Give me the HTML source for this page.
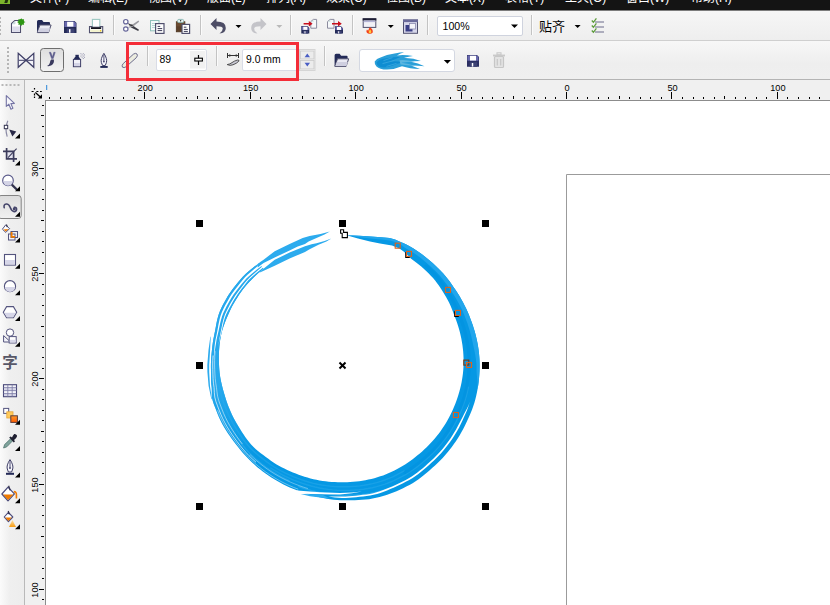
<!DOCTYPE html>
<html lang="zh"><head><meta charset="utf-8"><title>CorelDRAW</title>
<style>
html,body{margin:0;padding:0;background:#fff;}
#app{position:relative;width:830px;height:605px;overflow:hidden;background:#f0f0f0;font-family:"Liberation Sans", "Noto Sans CJK SC", sans-serif;font-size:11px;color:#000;}
.abs{position:absolute;}
#menubar{position:absolute;left:0;top:0;width:830px;height:11px;background:linear-gradient(#141414 0,#141414 10px,#7c7c7c 10px,#7c7c7c 11px);overflow:hidden;}
#menubar span{position:absolute;top:-8.6px;color:#fff;font-size:12px;line-height:14px;white-space:nowrap;}
#tb1{position:absolute;left:0;top:11px;width:830px;height:29px;background:linear-gradient(#f6f6f6,#eeeeee);}
#tb2{position:absolute;left:0;top:41px;width:830px;height:38px;background:linear-gradient(#f7f7f7,#eeeeee 60%,#efefef);}
.hl{position:absolute;left:0;width:830px;height:1px;}
#toolbox{position:absolute;left:0;top:80px;width:24px;height:525px;background:linear-gradient(90deg,#fbfbfb,#efefef 40%,#ededed);}
#hruler{position:absolute;left:25px;top:80px;width:805px;height:20px;background:#f0f0f0;}
#vruler{position:absolute;left:25px;top:100px;width:20px;height:505px;background:#f0f0f0;}
#canvas{position:absolute;left:46px;top:101px;width:784px;height:504px;background:#fff;}
.rl{position:absolute;font-size:9.2px;line-height:10px;color:#000;white-space:nowrap;}
.inp{position:absolute;background:#fff;border:1px solid #d4d8e2;border-radius:2px;box-sizing:border-box;font-size:11px;}
.inp span{position:absolute;white-space:nowrap;}
svg{position:absolute;left:0;top:0;overflow:visible;}
</style></head>
<body><div id="app">
<div id="menubar">
<div class="abs" style="left:0;top:0;width:10px;height:4px;background:#7db52c"></div>
<div class="abs" style="left:4.5px;top:-1px;width:2.6px;height:3.6px;background:#22300c;transform:skewX(-18deg)"></div>
<span style="left:30px">文件(F)</span>
<span style="left:88px">编辑(E)</span>
<span style="left:148px">视图(V)</span>
<span style="left:207px">版面(L)</span>
<span style="left:266px">排列(A)</span>
<span style="left:326px">效果(C)</span>
<span style="left:386px">位图(B)</span>
<span style="left:445px">文本(X)</span>
<span style="left:505px">表格(T)</span>
<span style="left:565px">工具(O)</span>
<span style="left:626px">窗口(W)</span>
<span style="left:691px">帮助(H)</span>
</div>
<div id="tb1"></div>
<div class="inp" style="left:437px;top:16px;width:86px;height:20px;border-color:#cfd3de"><span style="left:4.5px;top:3px;font-size:10.6px;">100%</span></div>
<div class="abs" style="left:539px;top:19px;font-size:13px;line-height:16px;white-space:nowrap">贴齐</div>
<div class="hl" style="top:40px;background:#cfcfcf"></div>
<div id="tb2"></div>
<div class="inp" style="left:156px;top:49px;width:51px;height:22px;border-color:#d9dce6"><span style="left:2.6px;top:4.2px;font-size:10.4px;">89</span></div>
<div class="inp" style="left:242px;top:49px;width:58px;height:22px;border-color:#d9dce6"><span style="left:3px;top:4.2px;font-size:10.4px;">9.0 mm</span></div>
<div class="inp" style="left:359px;top:49px;width:96px;height:23px;border-color:#d4d8e2;border-radius:3px"></div>
<div class="hl" style="top:79px;background:#b4b4b4"></div>
<div id="toolbox"></div>
<div class="abs" style="left:24px;top:80px;width:1px;height:525px;background:#b9b9b9"></div>
<div id="hruler"></div><div id="vruler"></div>
<div class="abs" style="left:2px;top:354px;width:16px;height:18px;font-size:15.5px;line-height:18px;font-weight:bold;color:#585868;text-align:center">字</div>
<div class="abs" style="left:45px;top:100px;width:785px;height:1px;background:#8c8c8c"></div>
<div class="abs" style="left:45px;top:100px;width:1px;height:505px;background:#8c8c8c"></div>
<div id="canvas"></div>
<div class="rl" style="left:130.2px;top:82.5px;width:30px;text-align:center">200</div>
<div class="rl" style="left:235.6px;top:82.5px;width:30px;text-align:center">150</div>
<div class="rl" style="left:341.1px;top:82.5px;width:30px;text-align:center">100</div>
<div class="rl" style="left:446.6px;top:82.5px;width:30px;text-align:center">50</div>
<div class="rl" style="left:552.0px;top:82.5px;width:30px;text-align:center">0</div>
<div class="rl" style="left:657.5px;top:82.5px;width:30px;text-align:center">50</div>
<div class="rl" style="left:762.9px;top:82.5px;width:30px;text-align:center">100</div>
<div class="rl" style="left:20.3px;top:163.8px;width:30px;height:10px;text-align:center;transform:rotate(-90deg);transform-origin:50% 50%">300</div>
<div class="rl" style="left:20.3px;top:269.1px;width:30px;height:10px;text-align:center;transform:rotate(-90deg);transform-origin:50% 50%">250</div>
<div class="rl" style="left:20.3px;top:374.3px;width:30px;height:10px;text-align:center;transform:rotate(-90deg);transform-origin:50% 50%">200</div>
<div class="rl" style="left:20.3px;top:479.6px;width:30px;height:10px;text-align:center;transform:rotate(-90deg);transform-origin:50% 50%">150</div>
<div class="rl" style="left:20.3px;top:584.8px;width:30px;height:10px;text-align:center;transform:rotate(-90deg);transform-origin:50% 50%">100</div>
<svg width="830" height="605" viewBox="0 0 830 605">
<rect x="49" y="97" width="1" height="2" fill="#000"/>
<rect x="60" y="97" width="1" height="2" fill="#000"/>
<rect x="70" y="97" width="1" height="2" fill="#000"/>
<rect x="81" y="97" width="1" height="2" fill="#000"/>
<rect x="91" y="96" width="1" height="3" fill="#000"/>
<rect x="102" y="97" width="1" height="2" fill="#000"/>
<rect x="113" y="97" width="1" height="2" fill="#000"/>
<rect x="123" y="97" width="1" height="2" fill="#000"/>
<rect x="134" y="97" width="1" height="2" fill="#000"/>
<rect x="144" y="92" width="1" height="7" fill="#000"/>
<rect x="155" y="97" width="1" height="2" fill="#000"/>
<rect x="165" y="97" width="1" height="2" fill="#000"/>
<rect x="176" y="97" width="1" height="2" fill="#000"/>
<rect x="186" y="97" width="1" height="2" fill="#000"/>
<rect x="197" y="96" width="1" height="3" fill="#000"/>
<rect x="207" y="97" width="1" height="2" fill="#000"/>
<rect x="218" y="97" width="1" height="2" fill="#000"/>
<rect x="229" y="97" width="1" height="2" fill="#000"/>
<rect x="239" y="97" width="1" height="2" fill="#000"/>
<rect x="250" y="92" width="1" height="7" fill="#000"/>
<rect x="260" y="97" width="1" height="2" fill="#000"/>
<rect x="271" y="97" width="1" height="2" fill="#000"/>
<rect x="281" y="97" width="1" height="2" fill="#000"/>
<rect x="292" y="97" width="1" height="2" fill="#000"/>
<rect x="302" y="96" width="1" height="3" fill="#000"/>
<rect x="313" y="97" width="1" height="2" fill="#000"/>
<rect x="323" y="97" width="1" height="2" fill="#000"/>
<rect x="334" y="97" width="1" height="2" fill="#000"/>
<rect x="345" y="97" width="1" height="2" fill="#000"/>
<rect x="355" y="92" width="1" height="7" fill="#000"/>
<rect x="366" y="97" width="1" height="2" fill="#000"/>
<rect x="376" y="97" width="1" height="2" fill="#000"/>
<rect x="387" y="97" width="1" height="2" fill="#000"/>
<rect x="397" y="97" width="1" height="2" fill="#000"/>
<rect x="408" y="96" width="1" height="3" fill="#000"/>
<rect x="418" y="97" width="1" height="2" fill="#000"/>
<rect x="429" y="97" width="1" height="2" fill="#000"/>
<rect x="439" y="97" width="1" height="2" fill="#000"/>
<rect x="450" y="97" width="1" height="2" fill="#000"/>
<rect x="461" y="92" width="1" height="7" fill="#000"/>
<rect x="471" y="97" width="1" height="2" fill="#000"/>
<rect x="482" y="97" width="1" height="2" fill="#000"/>
<rect x="492" y="97" width="1" height="2" fill="#000"/>
<rect x="503" y="97" width="1" height="2" fill="#000"/>
<rect x="513" y="96" width="1" height="3" fill="#000"/>
<rect x="524" y="97" width="1" height="2" fill="#000"/>
<rect x="534" y="97" width="1" height="2" fill="#000"/>
<rect x="545" y="97" width="1" height="2" fill="#000"/>
<rect x="555" y="97" width="1" height="2" fill="#000"/>
<rect x="566" y="92" width="1" height="7" fill="#000"/>
<rect x="577" y="97" width="1" height="2" fill="#000"/>
<rect x="587" y="97" width="1" height="2" fill="#000"/>
<rect x="598" y="97" width="1" height="2" fill="#000"/>
<rect x="608" y="97" width="1" height="2" fill="#000"/>
<rect x="619" y="96" width="1" height="3" fill="#000"/>
<rect x="629" y="97" width="1" height="2" fill="#000"/>
<rect x="640" y="97" width="1" height="2" fill="#000"/>
<rect x="650" y="97" width="1" height="2" fill="#000"/>
<rect x="661" y="97" width="1" height="2" fill="#000"/>
<rect x="671" y="92" width="1" height="7" fill="#000"/>
<rect x="682" y="97" width="1" height="2" fill="#000"/>
<rect x="693" y="97" width="1" height="2" fill="#000"/>
<rect x="703" y="97" width="1" height="2" fill="#000"/>
<rect x="714" y="97" width="1" height="2" fill="#000"/>
<rect x="724" y="96" width="1" height="3" fill="#000"/>
<rect x="735" y="97" width="1" height="2" fill="#000"/>
<rect x="745" y="97" width="1" height="2" fill="#000"/>
<rect x="756" y="97" width="1" height="2" fill="#000"/>
<rect x="766" y="97" width="1" height="2" fill="#000"/>
<rect x="777" y="92" width="1" height="7" fill="#000"/>
<rect x="787" y="97" width="1" height="2" fill="#000"/>
<rect x="798" y="97" width="1" height="2" fill="#000"/>
<rect x="809" y="97" width="1" height="2" fill="#000"/>
<rect x="819" y="97" width="1" height="2" fill="#000"/>
<rect x="42" y="105" width="2" height="1" fill="#000"/>
<rect x="41" y="115" width="3" height="1" fill="#000"/>
<rect x="42" y="126" width="2" height="1" fill="#000"/>
<rect x="42" y="136" width="2" height="1" fill="#000"/>
<rect x="42" y="147" width="2" height="1" fill="#000"/>
<rect x="42" y="157" width="2" height="1" fill="#000"/>
<rect x="39" y="168" width="5" height="1" fill="#000"/>
<rect x="42" y="178" width="2" height="1" fill="#000"/>
<rect x="42" y="189" width="2" height="1" fill="#000"/>
<rect x="42" y="199" width="2" height="1" fill="#000"/>
<rect x="42" y="210" width="2" height="1" fill="#000"/>
<rect x="41" y="220" width="3" height="1" fill="#000"/>
<rect x="42" y="231" width="2" height="1" fill="#000"/>
<rect x="42" y="241" width="2" height="1" fill="#000"/>
<rect x="42" y="252" width="2" height="1" fill="#000"/>
<rect x="42" y="263" width="2" height="1" fill="#000"/>
<rect x="39" y="273" width="5" height="1" fill="#000"/>
<rect x="42" y="284" width="2" height="1" fill="#000"/>
<rect x="42" y="294" width="2" height="1" fill="#000"/>
<rect x="42" y="305" width="2" height="1" fill="#000"/>
<rect x="42" y="315" width="2" height="1" fill="#000"/>
<rect x="41" y="326" width="3" height="1" fill="#000"/>
<rect x="42" y="336" width="2" height="1" fill="#000"/>
<rect x="42" y="347" width="2" height="1" fill="#000"/>
<rect x="42" y="357" width="2" height="1" fill="#000"/>
<rect x="42" y="368" width="2" height="1" fill="#000"/>
<rect x="39" y="378" width="5" height="1" fill="#000"/>
<rect x="42" y="389" width="2" height="1" fill="#000"/>
<rect x="42" y="399" width="2" height="1" fill="#000"/>
<rect x="42" y="410" width="2" height="1" fill="#000"/>
<rect x="42" y="420" width="2" height="1" fill="#000"/>
<rect x="41" y="431" width="3" height="1" fill="#000"/>
<rect x="42" y="441" width="2" height="1" fill="#000"/>
<rect x="42" y="452" width="2" height="1" fill="#000"/>
<rect x="42" y="462" width="2" height="1" fill="#000"/>
<rect x="42" y="473" width="2" height="1" fill="#000"/>
<rect x="39" y="484" width="5" height="1" fill="#000"/>
<rect x="42" y="494" width="2" height="1" fill="#000"/>
<rect x="42" y="505" width="2" height="1" fill="#000"/>
<rect x="42" y="515" width="2" height="1" fill="#000"/>
<rect x="42" y="526" width="2" height="1" fill="#000"/>
<rect x="41" y="536" width="3" height="1" fill="#000"/>
<rect x="42" y="547" width="2" height="1" fill="#000"/>
<rect x="42" y="557" width="2" height="1" fill="#000"/>
<rect x="42" y="568" width="2" height="1" fill="#000"/>
<rect x="42" y="578" width="2" height="1" fill="#000"/>
<rect x="39" y="589" width="5" height="1" fill="#000"/>
<rect x="42" y="599" width="2" height="1" fill="#000"/>
<path d="M830 174.5 H566.5 V605" fill="none" stroke="#9b9b9b" stroke-width="1"/>
<path d="M348.00 235.20 L359.00 235.80 L367.20 236.30 L381.00 237.20 L389.50 237.90 L395.00 239.40 L399.40 241.40 L403.71 243.24 L406.89 244.83 L410.03 246.52 L413.10 248.33 L416.11 250.23 L419.06 252.23 L421.95 254.32 L424.77 256.48 L427.54 258.72 L430.25 261.02 L432.91 263.37 L435.52 265.78 L438.10 268.23 L440.61 270.74 L443.03 273.34 L445.34 276.03 L447.57 278.80 L449.72 281.62 L451.79 284.50 L453.82 287.41 L455.80 290.34 L457.74 293.30 L459.60 296.32 L461.39 299.38 L463.09 302.49 L464.71 305.64 L466.25 308.83 L467.70 312.07 L469.08 315.34 L470.38 318.64 L471.62 321.96 L472.78 325.32 L473.87 328.71 L474.87 332.12 L475.79 335.56 L476.61 339.03 L477.35 342.52 L477.99 346.03 L478.53 349.56 L478.96 353.10 L479.29 356.66 L479.51 360.23 L479.61 363.81 L479.60 367.38 L479.51 370.96 L479.32 374.53 L479.04 378.10 L478.66 381.66 L478.20 385.21 L477.63 388.74 L476.98 392.26 L476.22 395.76 L475.37 399.23 L474.41 402.68 L473.31 406.09 L472.09 409.45 L470.77 412.77 L469.37 416.06 L467.90 419.31 L466.40 422.54 L464.84 425.75 L463.21 428.92 L461.50 432.04 L459.71 435.13 L457.85 438.17 L455.91 441.16 L453.89 444.10 L451.80 446.98 L449.63 449.81 L447.38 452.58 L445.05 455.29 L442.66 457.93 L440.18 460.50 L437.64 463.00 L435.02 465.43 L432.39 467.83 L429.73 470.22 L427.04 472.57 L424.30 474.87 L421.49 477.09 L418.61 479.23 L415.64 481.26 L412.59 483.15 L409.46 484.90 L406.29 486.58 L403.08 488.19 L399.84 489.72 L396.55 491.16 L393.23 492.52 L389.88 493.79 L386.49 494.97 L383.06 496.05 L379.61 497.02 L376.13 497.87 L372.61 498.57 L369.07 499.13 L365.52 499.55 L361.95 499.86 L358.39 500.07 L354.83 500.20 L351.27 500.26 L347.72 500.26 L344.18 500.23 L340.64 500.16 L337.11 499.96 L333.58 499.65 L330.07 499.23 L326.58 498.70 L323.11 498.07 L319.66 497.35 L316.24 496.54 L312.84 495.64 L309.47 494.67 L306.12 493.62 L302.80 492.50 L299.50 491.33 L296.23 490.10 L292.99 488.79 L289.78 487.41 L286.60 485.95 L283.47 484.41 L280.37 482.79 L277.31 481.10 L274.30 479.33 L271.34 477.49 L268.42 475.57 L265.56 473.57 L262.75 471.50 L259.99 469.36 L257.29 467.15 L254.65 464.86 L252.08 462.50 L249.56 460.08 L247.12 457.59 L244.75 455.03 L242.45 452.41 L240.22 449.73 L238.02 447.02 L235.86 444.28 L233.74 441.50 L231.67 438.69 L229.64 435.83 L227.68 432.93 L225.79 429.97 L223.99 426.96 L222.27 423.89 L220.65 420.76 L219.14 417.58 L217.75 414.34 L216.50 411.04 L215.24 407.75 L213.93 404.46 L212.78 401.11 L212.02 397.66 L211.82 394.08 L211.83 390.50 L211.70 386.97 L211.27 383.51 L211.06 380.03 L211.00 376.55 L211.00 373.07 L210.95 369.61 L210.90 366.15 L210.97 362.70 L211.13 359.24 L211.38 355.80 L211.70 352.36 L212.06 348.92 L212.46 345.49 L212.92 342.06 L213.48 338.65 L214.18 335.26 L214.89 331.87 L215.53 328.45 L216.16 325.01 L216.84 321.56 L217.63 318.13 L218.60 314.74 L219.79 311.43 L221.22 308.21 L222.79 305.07 L224.45 301.97 L226.17 298.90 L227.95 295.87 L229.87 292.93 L231.90 290.06 L234.03 287.27 L236.22 284.53 L238.44 281.83 L240.67 279.14 L243.00 276.53 L245.50 274.08 L248.12 271.76 L250.80 269.53 L253.51 267.34 L256.21 265.15 L263.49 268.54 L261.02 270.69 L258.57 272.86 L256.16 275.07 L253.78 277.33 L251.46 279.63 L249.18 282.00 L246.98 284.43 L244.85 286.93 L242.81 289.50 L240.86 292.15 L239.03 294.87 L237.26 297.64 L235.52 300.42 L233.84 303.24 L232.25 306.11 L230.76 309.04 L229.40 312.03 L228.05 315.02 L226.74 318.03 L225.48 321.06 L224.30 324.13 L223.21 327.23 L222.24 330.37 L221.41 333.55 L220.72 336.77 L220.16 340.01 L219.70 343.26 L219.35 346.52 L219.10 349.79 L218.95 353.05 L218.87 356.32 L218.87 359.58 L218.95 362.83 L219.08 366.08 L219.28 369.32 L219.56 372.55 L219.99 375.76 L220.52 378.95 L221.17 382.12 L221.89 385.27 L222.69 388.38 L223.55 391.48 L224.45 394.56 L225.37 397.62 L226.36 400.66 L227.41 403.67 L228.54 406.66 L229.74 409.61 L231.01 412.54 L232.36 415.42 L233.78 418.27 L235.29 421.07 L236.87 423.83 L238.52 426.54 L240.19 429.24 L241.87 431.94 L243.59 434.60 L245.38 437.24 L247.25 439.81 L249.22 442.31 L251.31 444.71 L253.53 446.99 L255.86 449.15 L258.28 451.21 L260.76 453.19 L263.28 455.10 L265.82 456.98 L268.35 458.85 L270.89 460.69 L273.49 462.46 L276.14 464.13 L278.84 465.71 L281.59 467.21 L284.37 468.62 L287.19 469.97 L290.03 471.24 L292.90 472.44 L295.78 473.59 L298.69 474.68 L301.60 475.72 L304.53 476.72 L307.49 477.62 L310.47 478.44 L313.47 479.18 L316.49 479.84 L319.52 480.41 L322.56 480.90 L325.62 481.32 L328.68 481.66 L331.74 481.92 L334.81 482.12 L337.88 482.24 L340.95 482.30 L344.02 482.29 L347.09 482.21 L350.16 482.05 L353.22 481.83 L356.28 481.53 L359.32 481.16 L362.36 480.70 L365.39 480.18 L368.40 479.57 L371.40 478.89 L374.37 478.13 L377.33 477.29 L380.27 476.37 L383.17 475.38 L386.05 474.29 L388.89 473.12 L391.70 471.86 L394.46 470.51 L397.19 469.09 L399.87 467.60 L402.51 466.03 L405.11 464.40 L407.67 462.70 L410.18 460.95 L412.66 459.13 L415.09 457.27 L417.48 455.35 L419.84 453.39 L422.16 451.38 L424.43 449.32 L426.66 447.21 L428.83 445.04 L430.95 442.81 L433.02 440.53 L435.03 438.20 L436.98 435.82 L438.88 433.39 L440.71 430.90 L442.48 428.37 L444.18 425.79 L445.81 423.17 L447.38 420.50 L448.87 417.79 L450.29 415.03 L451.65 412.24 L452.94 409.42 L454.17 406.57 L455.34 403.68 L456.44 400.77 L457.47 397.82 L458.43 394.85 L459.31 391.85 L460.12 388.83 L460.85 385.78 L461.50 382.71 L462.06 379.62 L462.54 376.51 L462.94 373.39 L463.24 370.25 L463.45 367.10 L463.57 363.95 L463.59 360.79 L463.53 357.63 L463.38 354.47 L463.15 351.31 L462.82 348.16 L462.42 345.02 L461.93 341.88 L461.36 338.76 L460.70 335.65 L459.97 332.56 L459.15 329.49 L458.26 326.43 L457.30 323.40 L456.26 320.39 L455.14 317.40 L454.00 314.41 L452.85 311.42 L451.67 308.43 L450.42 305.46 L449.06 302.53 L447.57 299.66 L445.93 296.87 L444.25 294.10 L442.56 291.33 L440.82 288.58 L439.01 285.85 L437.13 283.18 L435.14 280.57 L433.04 278.05 L430.81 275.65 L428.51 273.31 L426.15 271.02 L423.73 268.79 L421.26 266.61 L418.73 264.50 L416.15 262.45 L413.50 260.47 L410.81 258.56 L407.50 255.00 L404.00 251.80 L399.40 248.50 L392.00 245.40 L380.00 243.40 L370.00 241.60 L358.00 238.60 L348.30 235.80 Z" fill="#0698e4"/>
<path d="M348.00 235.20 L359.00 235.80 L367.20 236.30 L381.00 237.20 L389.50 237.90 L395.00 239.40 L399.40 241.40 L403.71 243.24 L406.89 244.83 L410.03 246.52 L413.10 248.33 L416.11 250.23 L419.06 252.23 L421.95 254.32 L424.77 256.48 L427.54 258.72 L430.25 261.02 L432.91 263.37 L435.52 265.78 L438.10 268.23 L440.61 270.74 L443.03 273.34 L445.34 276.03 L447.57 278.80 L449.72 281.62 L451.79 284.50 L453.82 287.41 L455.80 290.34 L457.74 293.30 L459.60 296.32 L461.39 299.38 L463.09 302.49 L464.71 305.64 L466.25 308.83 L467.70 312.07 L469.08 315.34 L470.38 318.64 L471.62 321.96 L472.78 325.32 L473.87 328.71 L474.87 332.12 L475.79 335.56 L476.61 339.03 L477.35 342.52 L477.99 346.03 L478.53 349.56 L478.96 353.10 L479.29 356.66 L479.51 360.23 L479.61 363.81 L479.60 367.38 L479.51 370.96 L479.32 374.53 L479.04 378.10 L478.66 381.66 L478.20 385.21 L477.63 388.74 L477.24 388.67 L477.56 385.11 L477.45 381.51 L477.10 377.91 L476.73 374.35 L476.54 370.83 L476.57 367.33 L476.43 363.84 L476.09 360.35 L475.60 356.89 L474.98 353.45 L474.28 350.04 L473.55 346.65 L472.82 343.28 L472.10 339.91 L471.31 336.55 L470.45 333.22 L469.51 329.92 L468.49 326.63 L467.41 323.37 L466.25 320.14 L465.02 316.93 L463.73 313.75 L462.36 310.61 L460.90 307.50 L459.35 304.43 L457.71 301.42 L455.98 298.45 L454.18 295.53 L452.31 292.65 L450.40 289.79 L448.46 286.96 L446.47 284.16 L444.42 281.40 L442.29 278.69 L440.07 276.05 L437.75 273.50 L435.33 271.04 L432.87 268.63 L430.35 266.26 L427.79 263.95 L425.18 261.68 L422.52 259.48 L419.79 257.34 L417.00 255.29 L414.15 253.32 L411.23 251.44 L408.25 249.67 L405.20 248.02 L400.50 244.60 L396.00 242.30 L390.00 240.40 L381.00 239.60 L370.00 238.60 L358.00 237.00 L348.20 235.50 Z" fill="#22a6ec"/>
<path d="M458.78 426.56 L456.53 430.55 L454.16 434.46 L451.65 438.29 L449.02 442.02 L446.25 445.67 L443.36 449.21 L440.34 452.64 L437.20 455.97 L433.94 459.17 L430.57 462.26 L427.16 465.30 L423.69 468.28 L420.14 471.17 L416.48 473.94 L412.70 476.54 L408.78 478.93 L404.76 481.15 L400.67 483.24 L396.51 485.19 L392.29 486.99 L388.00 488.64 L383.65 490.12 L379.25 491.43 L374.80 492.56 L370.30 493.46 L365.77 494.14 L361.22 494.62 L356.66 494.95 L352.10 495.13 L347.55 495.21 L343.00 495.20 L338.46 495.07 L333.93 494.74 L329.42 494.24 L324.93 493.58 L320.48 492.74 L316.06 491.76 L311.68 490.63 L307.34 489.37 L303.04 487.98 L298.79 486.47" fill="none" stroke="#3cb2ef" stroke-opacity="0.55" stroke-width="1.4" stroke-linecap="round"/>
<path d="M468.40 387.11 L467.44 391.49 L466.33 395.83 L465.06 400.12 L463.60 404.35 L461.99 408.51 L460.24 412.62 L458.38 416.67 L456.42 420.66 L454.33 424.59 L452.11 428.44 L449.76 432.21 L447.28 435.90 L444.68 439.49 L441.95 442.99 L439.10 446.39 L436.14 449.69 L433.06 452.88 L429.87 455.95 L426.58 458.92 L423.24 461.83 L419.84 464.66 L416.35 467.40 L412.76 470.02 L409.07 472.48 L405.26 474.77 L401.37 476.92 L397.40 478.93 L393.37 480.79 L389.26 482.50 L385.10 484.05 L380.87 485.44 L376.60 486.67 L372.28 487.71 L367.92 488.56 L363.53 489.22 L359.13 489.71 L354.71 490.05 L350.30 490.26 L345.88 490.35 L341.46 490.35 L337.05 490.19 L332.65 489.87 L328.27 489.40 L323.90 488.76 L319.56 487.98 L315.26 487.04 L310.98 485.97 L306.75 484.75 L302.56 483.39 L298.41 481.91 L294.30 480.31 L290.24 478.60 L286.23 476.76 L282.27 474.80 L278.38 472.70 L274.56 470.46 L270.83 468.07" fill="none" stroke="#3cb2ef" stroke-opacity="0.35" stroke-width="1.4" stroke-linecap="round"/>
<path d="M404.12 470.86 L400.40 472.96 L396.62 474.93 L392.76 476.77 L388.84 478.45 L384.85 479.98 L380.81 481.35 L376.71 482.57 L372.58 483.64 L368.41 484.53 L364.21 485.26 L359.98 485.83 L355.74 486.26 L351.50 486.55 L347.25 486.72 L343.00 486.78 L338.75 486.71 L334.50 486.50 L330.27 486.15 L326.04 485.65 L321.84 485.01 L317.66 484.23 L313.50 483.31 L309.38 482.24 L305.30 481.03 L301.26 479.68 L297.26 478.21 L293.29 476.64 L289.37 474.97 L285.48 473.17 L281.66 471.25 L277.90 469.19 L274.21 466.99 L270.61 464.63 L267.12 462.12 L263.69 459.52 L260.28 456.87 L256.93 454.13 L253.68 451.26 L250.57 448.22 L247.66 445.00 L244.94 441.61 L242.37 438.11 L239.92 434.53 L237.55 430.89 L235.23 427.22 L233.00 423.49 L230.90 419.67 L228.96 415.77 L227.17 411.80 L225.53 407.76 L223.99 403.67 L222.56 399.54 L221.34 395.33 L220.40 391.06 L219.56 386.77" fill="none" stroke="#3cb2ef" stroke-opacity="0.35" stroke-width="1.4" stroke-linecap="round"/>
<path d="M289.12 480.54 L285.04 478.63 L281.01 476.58 L277.06 474.39 L273.19 472.06 L269.40 469.59 L265.71 466.96 L262.12 464.21 L258.59 461.36 L255.14 458.42 L251.79 455.35 L248.57 452.14 L245.51 448.78 L242.62 445.28 L239.83 441.68 L237.16 438.00 L234.57 434.26 L232.07 430.45 L229.66 426.57 L227.39 422.61 L225.29 418.54 L223.37 414.39 L221.64 410.15 L220.01 405.86 L218.41 401.55 L217.14 397.14 L216.46 392.58 L216.01 388.01 L215.31 383.50 L214.79 378.97 L214.50 374.41 L214.30 369.86 L214.16 365.30 L214.19 360.75 L214.37 356.19 L214.68 351.64 L215.09 347.09 L215.63 342.54" fill="none" stroke="#3cb2ef" stroke-opacity="0.50" stroke-width="1.4" stroke-linecap="round"/>
<path d="M426.01 266.07 L429.34 269.11 L432.57 272.25 L435.69 275.49 L438.61 278.91 L441.35 282.47 L443.93 286.14 L446.40 289.88 L448.79 293.64 L451.13 297.43 L453.26 301.34 L455.21 305.34 L457.00 309.40 L458.71 313.48 L460.35 317.59 L461.88 321.73 L463.28 325.92 L464.54 330.15 L465.66 334.42 L466.64 338.72 L467.46 343.05 L468.13 347.41 L468.64 351.79 L468.99 356.19 L469.16 360.59 L469.17 365.00 L469.00 369.40 L468.67 373.79 L468.18 378.16 L467.53 382.50 L466.72 386.82 L465.77 391.09 L464.66 395.33 L463.40 399.52 L461.97 403.66 L460.40 407.73 L458.69 411.74 L456.87 415.70 L454.96 419.61 L452.92 423.44 L450.75 427.21 L448.45 430.89 L446.03 434.49 L443.48 438.01 L440.82 441.43 L438.04 444.75 L435.15 447.98 L432.16 451.10 L429.05 454.11 L425.85 457.02 L422.59 459.86 L419.27 462.62 L415.87 465.30 L412.38 467.86 L408.80 470.30 L405.11 472.57" fill="none" stroke="#008fdd" stroke-opacity="0.50" stroke-width="3" stroke-linecap="round"/>
<defs><linearGradient id="lgl" gradientUnits="userSpaceOnUse" x1="0" y1="455" x2="0" y2="385"><stop offset="0" stop-color="#2cabee" stop-opacity="0"/><stop offset="1" stop-color="#2cabee" stop-opacity="0.85"/></linearGradient></defs>
<path d="M253.79 464.08 L251.21 461.68 L248.69 459.21 L246.25 456.67 L243.88 454.06 L241.58 451.39 L239.35 448.66 L237.15 445.91 L234.98 443.13 L232.85 440.31 L230.78 437.45 L228.76 434.54 L226.81 431.58 L224.94 428.57 L223.15 425.50 L221.46 422.37 L219.88 419.18 L218.42 415.94 L217.09 412.64 L215.85 409.30 L214.53 405.98 L213.27 402.63 L212.27 399.20 L211.86 395.63 L211.82 392.00 L211.80 388.41 L211.43 384.90 L211.11 381.39 L211.01 377.87 L211.00 374.35 L210.98 370.85 L210.90 367.36 L210.93 363.87 L211.07 360.38 L211.30 356.89 L211.60 353.41 L211.95 349.94 L212.34 346.48 L212.79 343.01 L213.32 339.56 L213.99 336.13 L214.73 332.71 L215.39 329.26 L216.02 325.79 L216.69 322.30 L217.46 318.83 L218.39 315.39 L219.55 312.03 L220.96 308.77 L222.53 305.58 L224.19 302.44 L225.92 299.34 L227.70 296.27 L229.62 293.28 L231.67 290.38 L233.81 287.56 L236.01 284.78 L238.26 282.05 L240.51 279.33 L242.85 276.68 L245.37 274.20 L248.01 271.85 L250.72 269.60 L253.46 267.39 L256.18 265.18 L258.85 262.92 L263.49 268.54 L260.99 270.71 L258.52 272.91 L256.08 275.14 L253.69 277.42 L251.34 279.75 L249.05 282.15 L246.82 284.61 L244.68 287.14 L242.62 289.74 L240.67 292.42 L238.83 295.18 L237.04 297.98 L235.30 300.80 L233.61 303.65 L232.01 306.56 L230.53 309.53 L229.16 312.55 L227.80 315.57 L226.49 318.62 L225.23 321.69 L224.06 324.79 L222.98 327.94 L222.03 331.12 L221.22 334.34 L220.57 337.60 L220.02 340.87 L219.60 344.16 L219.27 347.46 L219.05 350.76 L218.91 354.06 L218.86 357.36 L218.89 360.65 L218.99 363.93 L219.14 367.21 L219.36 370.48 L219.70 373.74 L220.18 376.98 L220.76 380.19 L221.45 383.38 L222.22 386.55 L223.05 389.69 L223.93 392.81 L224.85 395.91 L225.81 399.00 L226.84 402.06 L227.94 405.09 L229.11 408.09 L230.36 411.06 L231.68 413.99 L233.08 416.89 L234.56 419.74 L236.12 422.55 L237.76 425.31 L239.44 428.04 L241.13 430.76 L242.85 433.47 L244.63 436.15 L246.48 438.78 L248.43 441.33 L250.49 443.80 L252.68 446.15 L255.00 448.37 L257.42 450.49 L259.91 452.52 L262.44 454.47 Z" fill="url(#lgl)"/>
<path d="M469.99 401.41 L468.96 404.76 L467.85 408.08 L466.60 411.35 L465.17 414.54 L463.67 417.70 L462.24 420.88 L460.78 424.06 L459.21 427.17 L457.52 430.23 L455.76 433.25 L453.92 436.22 L452.01 439.14 L450.02 442.01 L447.95 444.83 L445.80 447.59 L443.58 450.29 L441.29 452.92 L438.92 455.49 L436.47 457.99 L433.96 460.42 L431.38 462.78 L428.80 465.13 L426.19 467.45 L423.53 469.74 L420.83 471.98 L418.06 474.14 L415.21 476.20 L412.28 478.14 L409.26 479.93 L406.17 481.62 L403.05 483.24 L399.90 484.78 L396.71 486.26 L393.50 487.71 L390.28 489.12 L387.02 490.46 L383.72 491.73 L380.39 492.90 L377.02 493.96 L373.60 494.84 L370.13 495.53 L366.63 496.03 L363.12 496.42 L359.62 496.82 L356.12 497.20 L352.61 497.53 L349.10 497.77 L345.58 497.91 L342.05 497.90 L338.54 497.74 L335.03 497.45 L331.53 497.04 L328.06 496.52 L324.60 495.92 L324.60 495.92 L328.07 496.39 L331.57 496.59 L335.08 496.60 L338.58 496.54 L342.06 496.51 L345.55 496.51 L349.03 496.35 L352.51 496.07 L355.97 495.71 L359.42 495.29 L362.88 494.85 L366.34 494.43 L369.79 493.90 L373.21 493.20 L376.58 492.31 L379.91 491.27 L383.20 490.11 L386.46 488.86 L389.67 487.53 L392.86 486.14 L396.02 484.71 L399.17 483.25 L402.28 481.72 L405.36 480.13 L408.41 478.46 L411.39 476.69 L414.29 474.77 L417.10 472.74 L419.83 470.60 L422.50 468.40 L425.11 466.13 L427.69 463.84 L430.24 461.52 L432.78 459.19 L435.27 456.79 L437.68 454.33 L440.02 451.79 L442.29 449.19 L444.48 446.52 L446.59 443.80 L448.64 441.02 L450.60 438.19 L452.49 435.30 L454.31 432.37 L456.04 429.39 L457.71 426.37 L459.32 423.33 L460.91 420.26 L462.49 417.19 L464.06 414.09 L465.64 410.99 L467.27 407.88 L468.77 404.70 L469.99 401.41 Z" fill="#fff"/>
<path d="M297.00 490.40 L310.00 491.60 L320.00 492.20 L340.00 493.00 L352.00 492.60 L362.00 491.40 L352.00 493.20 L340.00 494.40 L320.00 494.30 L303.00 493.80 L296.00 492.40 Z" fill="#fff"/>
<path d="M300.70 494.00 L312.00 494.20 L322.00 494.40 L330.00 498.60 L320.00 497.60 L310.00 496.30 Z" fill="#2cabee"/>
<path d="M210.40 336.30 L208.50 350.00 L207.30 365.00 L207.40 372.00 L208.60 386.00 L211.20 398.50 L212.00 399.50 L210.00 386.00 L209.20 372.00 L209.20 365.00 L210.10 350.00 L210.70 337.20 Z" fill="#2cabee"/>
<path d="M255.69 461.97 L252.31 458.91 L249.04 455.73 L245.91 452.42 L242.92 448.98 L240.05 445.43 L237.27 441.82 L234.57 438.14 L231.96 434.38 L229.45 430.56 L227.05 426.65 L224.80 422.65 L222.72 418.55 L220.83 414.36 L219.15 410.08 L217.49 405.78 L215.90 401.45 L214.76 396.97 L214.34 392.35 L214.07 387.73 L213.45 383.21 L213.07 378.66 L212.91 374.10 L212.78 369.55 L212.70 365.00 L212.79 360.45 L213.03 355.91" fill="none" stroke="#fff" stroke-opacity="0.75" stroke-width="0.9" stroke-linecap="round"/>
<path d="M242.17 443.77 L239.48 440.21 L236.89 436.57 L234.39 432.87 L231.96 429.11 L229.63 425.28 L227.45 421.36 L225.43 417.35 L223.58 413.25 L221.92 409.07 L220.31 404.86 L218.79 400.62 L217.61 396.26 L216.97 391.79 L216.45 387.31 L215.72 382.89 L215.21 378.43 L214.91 373.96 L214.70 369.48 L214.57 365.00 L214.59 360.52 L214.75 356.03 L215.05 351.55" fill="none" stroke="#fff" stroke-opacity="0.60" stroke-width="0.8" stroke-linecap="round"/>
<path d="M297.84 489.07 L293.56 487.38 L289.32 485.56 L285.15 483.60 L281.05 481.51 L277.02 479.28 L273.06 476.92 L269.19 474.42 L265.41 471.79 L261.73 469.02 L258.14 466.13 L254.65 463.12 L251.26 459.99 L247.99 456.75 L244.85 453.37 L241.85 449.88 L238.95 446.30 L236.11 442.66 L233.36 438.95 L230.70 435.17 L228.14 431.32 L225.70 427.37 L223.42 423.32 L221.31 419.18 L219.40 414.94 L217.70 410.60" fill="none" stroke="#fff" stroke-opacity="0.50" stroke-width="0.8" stroke-linecap="round"/>
<path d="M307.60 488.46 L303.33 487.09 L299.10 485.60 L294.92 483.99 L290.79 482.27 L286.71 480.41 L282.69 478.43 L278.73 476.32 L274.85 474.07 L271.05 471.68 L267.33 469.15 L263.72 466.47 L260.19 463.69 L256.73 460.81 L253.36 457.83 L250.09 454.72" fill="none" stroke="#fff" stroke-opacity="0.45" stroke-width="0.8" stroke-linecap="round"/>
<path d="M213.67 360.48 L213.85 357.03 L214.05 353.58 L214.28 350.12 L214.57 346.66 L214.97 343.22 L215.53 339.79 L216.22 336.38 L216.95 332.99 L217.59 329.56 L218.20 326.10 L218.85 322.63 L219.62 319.18 L220.56 315.76 L221.74 312.43 L223.19 309.21 L224.78 306.06 L226.46 302.95 L228.19 299.88 L229.97 296.83 L231.89 293.87 L233.92 290.99 L236.04 288.17 L238.21 285.40 L240.41 282.66 L242.62 279.93 L244.98 277.32 L247.50 274.86 L250.13 272.54 L252.81 270.27 L255.47 268.00 L258.10 265.71 L260.75 263.43 L262.26 265.29 L259.61 267.47 L256.90 269.59 L254.16 271.69 L251.48 273.88 L248.88 276.17 L246.38 278.58 L244.05 281.14 L241.86 283.82 L239.67 286.51 L237.51 289.23 L235.40 291.99 L233.37 294.82 L231.46 297.73 L229.69 300.73 L227.97 303.76 L226.31 306.82 L224.73 309.93 L223.28 313.10 L222.07 316.37 L221.06 319.71 L220.22 323.10 L219.47 326.50 L218.77 329.89 L218.05 333.27 L217.25 336.62 L216.53 339.99 L215.95 343.38 L215.42 346.79 L214.89 350.19 L214.37 353.61 L213.94 357.04 L213.67 360.48 Z" fill="#fff"/>
<path d="M218.26 347.47 L218.66 344.11 L219.10 340.76 L219.66 337.42 L220.33 334.09 L220.96 330.74 L221.60 327.39 L222.28 324.02 L223.05 320.66 L223.98 317.35 L225.14 314.10 L226.54 310.96 L228.08 307.88 L229.71 304.85 L231.39 301.85 L233.13 298.89 L234.98 296.00 L236.95 293.18 L238.98 290.41 L241.06 287.69 L243.17 284.98 L245.29 282.28 L247.53 279.69 L249.95 277.25 L252.49 274.94 L255.08 272.69 L257.67 270.47 L260.26 268.25 L262.86 266.03 L263.67 267.04 L261.08 269.20 L258.44 271.32 L255.79 273.45 L253.19 275.64 L250.68 277.94 L248.30 280.37 L246.09 282.96 L244.01 285.66 L241.95 288.36 L239.90 291.07 L237.91 293.83 L235.98 296.63 L234.15 299.50 L232.43 302.44 L230.75 305.40 L229.09 308.39 L227.52 311.41 L226.07 314.50 L224.87 317.70 L223.89 320.97 L223.08 324.29 L222.37 327.63 L221.72 330.96 L221.00 334.26 L220.14 337.52 L219.36 340.81 L218.73 344.13 L218.26 347.47 Z" fill="#fff"/>
<path d="M257.50 264.60 L259.90 262.30 L263.60 259.70 L274.70 251.20 L289.60 244.10 L302.70 237.90 L309.60 235.90 L320.50 233.90 L329.90 231.40 L329.90 231.60 L324.50 234.40 L316.50 237.90 L308.60 241.40 L305.00 243.90 L297.70 246.60 L289.60 250.40 L274.70 257.50 L263.60 263.00 L259.90 265.70 L257.80 267.60 Z" fill="#2cabee"/>
<path d="M259.50 271.90 L261.00 270.80 L274.70 259.70 L289.60 252.60 L305.00 246.30 L311.60 244.30 L316.50 243.30 L324.50 240.90 L331.40 238.40 L331.40 238.60 L326.40 241.40 L318.50 244.80 L309.60 249.30 L305.00 251.90 L289.60 258.60 L274.70 265.70 L261.00 271.90 L259.80 272.60 Z" fill="#2cabee"/>
<rect x="196" y="220" width="7" height="7" fill="#000"/>
<rect x="339" y="220" width="7" height="7" fill="#000"/>
<rect x="482" y="220" width="7" height="7" fill="#000"/>
<rect x="196" y="362" width="7" height="7" fill="#000"/>
<rect x="482" y="362" width="7" height="7" fill="#000"/>
<rect x="196" y="503" width="7" height="7" fill="#000"/>
<rect x="339" y="503" width="7" height="7" fill="#000"/>
<rect x="482" y="503" width="7" height="7" fill="#000"/>
<path d="M340.2 363.2 L344.8 367.8 M344.8 363.2 L340.2 367.8" stroke="#000" stroke-width="2" stroke-linecap="square" fill="none"/>
<rect x="395.2" y="243.2" width="5" height="5" fill="none" stroke="#e0621c" stroke-width="1.1"/>
<path d="M405.8 252.3 v5 h4" fill="none" stroke="#000" stroke-width="1.2"/>
<rect x="406.5" y="251.4" width="5" height="5" fill="none" stroke="#e0621c" stroke-width="1.1"/>
<rect x="445.5" y="287.4" width="5" height="5" fill="none" stroke="#e0621c" stroke-width="1.1"/>
<path d="M454.8 311.3 v5 h4" fill="none" stroke="#000" stroke-width="1.2"/>
<rect x="455.5" y="310.4" width="5" height="5" fill="none" stroke="#e0621c" stroke-width="1.1"/>
<rect x="463.8" y="360.1" width="5" height="5" fill="none" stroke="#7a3a10" stroke-width="1.1"/>
<rect x="466.5" y="362.5" width="5" height="5" fill="none" stroke="#e0621c" stroke-width="1.1"/>
<rect x="453.4" y="412.5" width="5" height="5" fill="none" stroke="#e0621c" stroke-width="1.1"/>
<path d="M340.6 229.8 h3 v2.6 h3.8 v5.2 h-5.2 v-4.4 h-1.6 z" fill="#fff" stroke="#000" stroke-width="1.1"/>
<rect x="-1" y="17" width="2" height="2" fill="#b5b5b5"/><rect x="-1" y="21" width="2" height="2" fill="#b5b5b5"/><rect x="-1" y="25" width="2" height="2" fill="#b5b5b5"/><rect x="-1" y="29" width="2" height="2" fill="#b5b5b5"/><rect x="-1" y="33" width="2" height="2" fill="#b5b5b5"/>
<path d="M11.5 32.5 V23.5 L14.8 20.5 H20.5 V32.5 Z" fill="#fff" stroke="#50506e" stroke-width="1.1"/>
<rect x="12.2" y="26.5" width="7.7" height="5.4" fill="#dcdcea"/>
<path d="M12.2 23.8 L15 21.2 V23.8 Z" fill="#e8f0f0" stroke="#a9c4c4" stroke-width="0.6"/>
<circle cx="21.2" cy="21.8" r="2.9" fill="#2e9613"/>
<path d="M21.2 18 l0.9 2 2 -0.9 -0.6 2.1 2 0.9 -2 0.9 0.6 2.1 -2 -0.9 -0.9 2 -0.9 -2 -2 0.9 0.6 -2.1 -2 -0.9 2 -0.9 -0.6 -2.1 2 0.9 z" fill="#2e9613"/>
<path d="M37 33 v-11.5 q0 -1.5 1.5 -1.5 h3.5 l1.5 2 h5.5 q1 0 1 1 v3 h-10 z" fill="#232a57"/><path d="M37.3 32.6 l2.6 -7.6 h11.2 l-2.6 7.6 z" fill="#e9e9f3" stroke="#50506e" stroke-width="1"/><path d="M37.9 32.1 l1.3 -3.8 h11 l-1.3 3.8 z" fill="#cfcfe0"/>
<path d="M64 21 h10.5 l2 2 v10 h-12.5 z" fill="#232a57"/><path d="M64.4 21.4 h9.9 l1.6 1.6 v3.9200000000000004 h-11.5 z" fill="#6a6aae"/><rect x="67.125" y="21.8" width="6.25" height="4.800000000000001" fill="#fff"/><rect x="66.75" y="28.439999999999998" width="7.75" height="4.5600000000000005" fill="#3d4274"/><rect x="69.0" y="29.16" width="1.5" height="3.5999999999999996" fill="#fff"/>
<rect x="92.4" y="19.4" width="7.4" height="8" fill="#fff" stroke="#9cc8c2" stroke-width="1.1"/>
<path d="M89.5 26.6 h2.4 v0.6 h8.4 v-0.6 h2.4 v6 h-13.2 z" fill="#fff" stroke="#50506e" stroke-width="1.1"/>
<rect x="91" y="27.3" width="10.2" height="1.7" fill="#15151f"/>
<rect x="90.3" y="29.6" width="11.6" height="2.5" fill="#f3f3cf"/>
<rect x="100" y="30.2" width="1.2" height="1.2" fill="#f0c000"/>
<rect x="113" y="15" width="1" height="20" fill="#c3c3c3"/><rect x="114" y="15" width="1" height="20" fill="#fbfbfb"/>
<circle cx="125.8" cy="21.7" r="2.2" fill="#fff" stroke="#66669a" stroke-width="1.2"/>
<circle cx="125.8" cy="29.0" r="2.2" fill="#fff" stroke="#66669a" stroke-width="1.2"/>
<path d="M127.6 23 L131.2 24.6 L139 29.8 L138.2 31 L131 27.6 Z" fill="#3c3c44"/>
<path d="M127.6 27.8 L131 25.6 L138.4 20.6 L139.2 21.8 L132.4 27 Z" fill="#9a9aa0"/>
<circle cx="131.9" cy="25.4" r="0.8" fill="#222"/>
<rect x="150.5" y="20.5" width="8.5" height="10.3" fill="#f4fafa" stroke="#8fc0ba" stroke-width="1"/>
<path d="M152 23.5h5M152 25.5h4M152 27.5h3" fill="none" stroke="#a8d0ca" stroke-width="0.8"/>
<rect x="155.6" y="23.6" width="8.4" height="9.8" fill="#fff" stroke="#50506e" stroke-width="1.2"/>
<path d="M157.6 26.4h2.6M157.6 28.6h4.6M157.6 30.6h4.6" fill="none" stroke="#3a3a56" stroke-width="1"/>
<rect x="176.3" y="21.8" width="8.6" height="10" fill="#5b3f28" stroke="#4a321e" stroke-width="0.8"/>
<rect x="176.3" y="21.8" width="8.6" height="4.6" fill="#6a4a30"/>
<rect x="177.6" y="19.4" width="6" height="3.2" fill="#e6f1f0" rx="1.2" stroke="#86b4b0" stroke-width="0.9"/>
<circle cx="180.6" cy="20.8" r="0.7" fill="#333"/>
<rect x="182" y="24.4" width="7.6" height="9" fill="#fff" stroke="#50506e" stroke-width="1.2"/>
<path d="M183.8 27.2h2.6M183.8 29.4h4M183.8 31.4h4" fill="none" stroke="#3a3a56" stroke-width="1"/>
<rect x="200" y="15" width="1" height="20" fill="#c3c3c3"/><rect x="201" y="15" width="1" height="20" fill="#fbfbfb"/>
<path d="M210.5 24 L216.5 18 V21.6 Q225.8 21.6 225.8 28 Q225.8 33 219.5 33.6 Q222.8 31.5 222.8 28.6 Q222.8 26.2 216.5 26.2 V30 Z" fill="#4d4d66"/>
<path d="M235.5 25 h6 l-3.0 3 z" fill="#000"/>
<path d="M266.5 24 L260.5 18 V21.6 Q251.2 21.6 251.2 28 Q251.2 33 257.5 33.6 Q254.2 31.5 254.2 28.6 Q254.2 26.2 260.5 26.2 V30 Z" fill="#c4c4c9"/>
<path d="M276.3 25 h6 l-3.0 3 z" fill="#b9b9b9"/>
<rect x="290" y="15" width="1" height="20" fill="#c3c3c3"/><rect x="291" y="15" width="1" height="20" fill="#fbfbfb"/>
<path d="M310.8 28.2 V21.6 L313.4 19.4 H316.6 V28.2 Z" fill="#f6f8fa" stroke="#8c8c9e" stroke-width="1"/>
<path d="M311.4 22 L313.6 20 V22 Z" fill="#cfe6e2"/>
<path d="M303.6 23 h5.2 v-2 l3.8 2.8 -3.8 2.8 v-2 h-5.2 z" fill="#c8101e"/>
<path d="M301.3 26 h6 l2 2 v5.6 h-8 z" fill="#232a57"/><path d="M301.7 26.4 h5.4 l1.6 1.6 v1.896 h-7 z" fill="#6a6aae"/><rect x="303.3" y="26.8" width="4.0" height="3.04" fill="#fff"/><rect x="303.06" y="30.712" width="4.96" height="2.888" fill="#3d4274"/><rect x="304.5" y="31.168" width="0.96" height="2.28" fill="#fff"/>
<path d="M327.5 28.2 V21.6 L330.2 19.4 H334 V28.2 Z" fill="#f6f8fa" stroke="#8c8c9e" stroke-width="1"/>
<path d="M328.1 22 L330.3 20 V22 Z" fill="#cfe6e2"/>
<path d="M332 23 h6 v-2 l3.8 2.8 -3.8 2.8 v-2 h-6 z" fill="#c8101e"/>
<path d="M335 26.2 h6 l2 2 v5.4 h-8 z" fill="#232a57"/><path d="M335.4 26.599999999999998 h5.4 l1.6 1.6 v1.8040000000000003 h-7 z" fill="#6a6aae"/><rect x="337.0" y="27.0" width="4.0" height="2.9600000000000004" fill="#fff"/><rect x="336.76" y="30.788" width="4.96" height="2.8120000000000003" fill="#3d4274"/><rect x="338.2" y="31.232" width="0.96" height="2.22" fill="#fff"/>
<rect x="352" y="15" width="1" height="20" fill="#c3c3c3"/><rect x="353" y="15" width="1" height="20" fill="#fbfbfb"/>
<rect x="363.2" y="18.8" width="12.6" height="8.6" fill="#f1f1f7" stroke="#50506e" stroke-width="1"/>
<rect x="362.7" y="18.3" width="13.6" height="2.2" fill="#1d1d33"/>
<rect x="363.7" y="20.5" width="11.6" height="1.6" fill="#b4b4d6"/>
<path d="M370 27.2 q3.6 2.4 2.6 5.6 q-1.4 1.4 -4.6 0.6 q-2.6 -1.4 -1 -4 q0.6 1.2 1.4 1 q0 -2 1.6 -3.2 z" fill="#f4401a"/>
<path d="M370.2 29.6 q1.6 1.4 1 3.2 q-1.2 0.7 -2.4 0 q-0.6 -1.6 1.4 -3.2 z" fill="#ffc83a"/>
<path d="M387.8 25 h6 l-3.0 3 z" fill="#000"/>
<rect x="403.5" y="20" width="14" height="13.3" fill="#d6d6ea" stroke="#50506e" stroke-width="1"/>
<rect x="403" y="19.5" width="15" height="2.6" fill="#6a6a9a"/>
<rect x="405.5" y="25" width="7" height="6.5" fill="#3a3f86"/>
<rect x="409.5" y="23.5" width="6" height="5.5" fill="#f4f4fa" stroke="#8a8ab0" stroke-width="0.8"/>
<rect x="427" y="15" width="1" height="20" fill="#c3c3c3"/><rect x="428" y="15" width="1" height="20" fill="#fbfbfb"/>
<rect x="531" y="15" width="1" height="20" fill="#c3c3c3"/><rect x="532" y="15" width="1" height="20" fill="#fbfbfb"/>
<path d="M511 24.5 h7 l-3.5 3.6 z" fill="#000"/>
<path d="M574.6 25 h6 l-3.0 3 z" fill="#000"/>
<path d="M595 22.0 h9" fill="none" stroke="#6a6a8a" stroke-width="1"/>
<path d="M591.8 20.5 l1.6 1.8 l3 -4" fill="none" stroke="#5d9c3c" stroke-width="1.3"/>
<path d="M595 27.0 h9" fill="none" stroke="#6a6a8a" stroke-width="1"/>
<path d="M591.8 25.5 l1.6 1.8 l3 -4" fill="none" stroke="#5d9c3c" stroke-width="1.3"/>
<path d="M595 32.0 h9" fill="none" stroke="#6a6a8a" stroke-width="1"/>
<path d="M591.8 30.5 l1.6 1.8 l3 -4" fill="none" stroke="#5d9c3c" stroke-width="1.3"/><rect x="7" y="47" width="2" height="2" fill="#b5b5b5"/><rect x="7" y="51" width="2" height="2" fill="#b5b5b5"/><rect x="7" y="55" width="2" height="2" fill="#b5b5b5"/><rect x="7" y="59" width="2" height="2" fill="#b5b5b5"/><rect x="7" y="63" width="2" height="2" fill="#b5b5b5"/><rect x="7" y="67" width="2" height="2" fill="#b5b5b5"/><rect x="7" y="71" width="2" height="2" fill="#b5b5b5"/>
<path d="M18.2 53.3 L33.8 67.3 V53.3 L18.2 67.3 Z" fill="#f4f4fa" stroke="#3e3e66" stroke-width="1.2" stroke-linejoin="miter"/>
<path d="M18.8 60.3 H33.2" fill="none" stroke="#3e3e66" stroke-width="1"/>
<defs><linearGradient id="gsel" x1="0" y1="0" x2="0" y2="1"><stop offset="0" stop-color="#dedede"/><stop offset="1" stop-color="#f2f2f2"/></linearGradient></defs>
<rect x="40.5" y="48.5" width="23" height="23" fill="url(#gsel)" rx="3" stroke="#6e6e6e" stroke-width="1"/>
<path d="M49.3 52.3 L51.6 58.6 H53.2 L55.2 52.3 H53.8 L52.4 57 L50.8 52.3 Z" fill="#5a5a8a" stroke="#5a5a8a" stroke-width="0.5"/>
<path d="M51.2 59.6 H53.8 Q54.6 63 52 65 Q49.6 66.6 47 66 Q49.4 65 49.8 63 Q50.2 60.6 51.2 59.6 Z" fill="#3a3a5e"/>
<rect x="73.4" y="59.4" width="7.2" height="7.3" fill="#f1f1f8" stroke="#3e3e66" stroke-width="1"/>
<rect x="74.1" y="63" width="5.8" height="3.1" fill="#d4d4e6"/>
<path d="M73.6 59.2 L75 57 H79 L80.4 59.2 Z" fill="#232a57"/>
<rect x="75.4" y="54.8" width="3.4" height="2.6" fill="#232a57"/>
<rect x="80.4" y="55.6" width="1" height="1" fill="#9a9ab2"/>
<rect x="81.6" y="54.4" width="1" height="1" fill="#9a9ab2"/>
<rect x="82.8" y="53.2" width="1" height="1" fill="#9a9ab2"/>
<rect x="81.6" y="56.8" width="1" height="1" fill="#9a9ab2"/>
<rect x="82.8" y="55.6" width="1" height="1" fill="#9a9ab2"/>
<rect x="84" y="54.4" width="1" height="1" fill="#9a9ab2"/>
<rect x="82.8" y="58" width="1" height="1" fill="#9a9ab2"/>
<rect x="84" y="56.8" width="1" height="1" fill="#9a9ab2"/>
<rect x="80.4" y="53.2" width="1" height="1" fill="#9a9ab2"/>
<path d="M103.9 53.3 Q100.3 59 101.4 62.6 L102.6 65.6 H105.2 L106.4 62.6 Q107.5 59 103.9 53.3 Z" fill="#f5f5fb" stroke="#3e3e66" stroke-width="1"/>
<path d="M103.9 55 V61" fill="none" stroke="#3e3e66" stroke-width="0.9"/>
<circle cx="103.9" cy="61.6" r="0.9" fill="#3e3e66"/>
<rect x="100.3" y="66" width="7.4" height="1.9" fill="#232a57"/>
<path d="M122.4 67.1 Q121.6 65.2 123.2 63.6 L133.4 54.2 Q135.6 52.6 137 54 Q138.2 55.6 136.2 57.8 L126 66.8 Q124 68.2 122.4 67.1 Z" fill="#ecece0" stroke="#6c6c8c" stroke-width="1"/>
<rect x="147" y="46" width="1" height="20" fill="#c3c3c3"/><rect x="148" y="46" width="1" height="20" fill="#fbfbfb"/>
<rect x="190" y="51" width="15.5" height="17.5" fill="#f1f1f1"/>
<path d="M198.5 55 V65" fill="none" stroke="#000" stroke-width="1.2"/>
<rect x="194.8" y="58.2" width="7.6" height="2.8" fill="#fff" stroke="#000" stroke-width="1.1"/>
<rect x="216" y="46" width="1" height="20" fill="#c3c3c3"/><rect x="217" y="46" width="1" height="20" fill="#fbfbfb"/>
<path d="M227.5 53 V58 M238.5 53 V58 M228 55.5 H238" fill="none" stroke="#333" stroke-width="1"/>
<path d="M230.2 54 L228.2 55.5 L230.2 57 Z M235.8 54 L237.8 55.5 L235.8 57 Z" fill="#333"/>
<path d="M227.2 64.6 Q230 66 233 64.8 Q236.8 63.4 238.8 61.2 Q239.4 59.6 237.6 60 Q234 61 232 62.6 Q230 64.2 227.2 64.6 Z" fill="#c8c8d4" stroke="#444" stroke-width="0.9"/>
<rect x="299.5" y="49.5" width="15.5" height="21" fill="#f3f3f3" stroke="#d5d5d5" stroke-width="1"/>
<rect x="300.5" y="51" width="13.5" height="8" fill="#ececec" stroke="#c9c9c9" stroke-width="0.8"/>
<rect x="300.5" y="60.5" width="13.5" height="8.5" fill="#ececec" stroke="#c9c9c9" stroke-width="0.8"/>
<path d="M304.6 57.2 L307.3 53.4 L310 57.2 Z" fill="#4a5ec4"/>
<path d="M304.6 62.8 L307.3 66.6 L310 62.8 Z" fill="#4a5ec4"/>
<rect x="324" y="46" width="1" height="20" fill="#c3c3c3"/><rect x="325" y="46" width="1" height="20" fill="#fbfbfb"/>
<path d="M334.6 66.8 v-11.5 q0 -1.5 1.5 -1.5 h3.5 l1.5 2 h5.5 q1 0 1 1 v3 h-10 z" fill="#232a57"/><path d="M334.90000000000003 66.39999999999999 l2.6 -7.6 h11.2 l-2.6 7.6 z" fill="#e9e9f3" stroke="#50506e" stroke-width="1"/><path d="M335.5 65.89999999999999 l1.3 -3.8 h11 l-1.3 3.8 z" fill="#cfcfe0"/>
<path d="M443.8 60 h7.2 l-3.6 3.8 z" fill="#000"/>
<path d="M467 55 h10 l2 2 v9.8 h-12 z" fill="#2a2e62"/><path d="M467.4 55.4 h9.4 l1.6 1.6 v3.8280000000000007 h-11 z" fill="#6a6aae"/><rect x="470.0" y="55.8" width="6.0" height="4.720000000000001" fill="#fff"/><rect x="469.64" y="62.316" width="7.4399999999999995" height="4.484" fill="#3d4274"/><rect x="471.8" y="63.024" width="1.44" height="3.54" fill="#fff"/>
<rect x="494.5" y="56.5" width="9" height="11" fill="#e3e3e3" rx="1" stroke="#c6c6c6" stroke-width="1.2"/>
<rect x="493" y="54.6" width="12" height="1.8" fill="#c9c9c9"/>
<rect x="497" y="52.8" width="4" height="2" fill="none" stroke="#c9c9c9" stroke-width="1.1"/>
<path d="M497.3 59 V65.5 M500.7 59 V65.5" fill="none" stroke="#c6c6c6" stroke-width="1.2"/><g transform="translate(2.5 0)"><path d="M372.2 61.5 Q374 58.5 378 57.5 Q384 54.6 392 53.6 Q399 52 401.5 52.2 Q397 53.6 394.5 55.4 Q402 54.6 410.5 56 Q404 57 401.5 58 Q410 57.6 418.5 61 Q411 61 407.5 61.6 Q416 63.2 422 66.2 Q413 65.4 408.5 65.6 Q413 67.4 417.5 69 Q407 68.6 399.5 66.2 Q392 69.4 384.5 69.6 Q377 69.4 374 66.4 Q371.8 64 372.2 61.5 Z" fill="#2a9fd8"/>
<path d="M374 62.5 Q377 58.6 384 58.2 Q392 56.8 398 57.2 Q391 59.4 388 61.4 Q394 60.8 401 62.2 Q394 63.6 390 65.8 Q383 68.4 377.5 67 Q374.2 65.4 374 62.5 Z" fill="#0e8dd2"/>
<path d="M397 60.2 Q404 59.6 412 61.8 Q404 61.8 399 62.8 Q406 63.6 413 66 Q404 65.6 398 64.6 Z" fill="#5cb6e0"/>
<path d="M381 60.6 L390 57.6 M380 63.6 L392 60.4 M384 66.4 L394 63.4" fill="none" stroke="#3aa8e0" stroke-width="0.8"/></g><rect x="1.5" y="84" width="2" height="2" fill="#b8b8b8"/>
<rect x="5.5" y="84" width="2" height="2" fill="#b8b8b8"/>
<rect x="9.5" y="84" width="2" height="2" fill="#b8b8b8"/>
<rect x="13.5" y="84" width="2" height="2" fill="#b8b8b8"/>
<rect x="17.5" y="84" width="2" height="2" fill="#b8b8b8"/>
<path d="M6.3 95.6 V106.4 L8.9 104.2 L10.9 109.2 L12.9 108.3 L10.9 103.6 L14.4 103.4 Z" fill="#f6f6fb" stroke="#7474a4" stroke-width="1.1" stroke-linejoin="round"/>
<path d="M7.8 120.8 Q4.6 128.5 7.2 136.6" fill="none" stroke="#8c8ca6" stroke-width="1.2"/>
<rect x="4.3" y="125.3" width="3.4" height="3.4" fill="#fff" stroke="#33334f" stroke-width="1"/>
<path d="M9.2 129.6 L16.3 131.4 L12.4 136.4 Z" fill="#2a2a48"/>
<path d="M20 133.6 V138.6 H15 Z" fill="#000"/>
<rect x="6.5" y="151.5" width="7.5" height="7.5" fill="#e4e4f0"/>
<path d="M6.6 148 V158.8 H17 M3 151.4 H13.6 V162" fill="none" stroke="#3c3c5c" stroke-width="1.7"/>
<path d="M8 157.6 L16.6 148.6" fill="none" stroke="#3c3c5c" stroke-width="1.1"/>
<path d="M20 160.4 V165.4 H15 Z" fill="#000"/>
<circle cx="8" cy="180.4" r="5.3" fill="#fff" stroke="#5a5a8a" stroke-width="1.2"/>
<path d="M3.3 181 H12.7 A4.7 4.7 0 0 1 3.3 181 Z" fill="#d4d4e6"/>
<path d="M11.8 184.6 L17 189.8" fill="none" stroke="#33334f" stroke-width="2.2"/>
<path d="M20 186.2 V191.2 H15 Z" fill="#000"/>
<defs><linearGradient id="gsel2" x1="0" y1="0" x2="0" y2="1"><stop offset="0" stop-color="#dcdcdc"/><stop offset="1" stop-color="#f1f1f1"/></linearGradient></defs>
<rect x="-2" y="195.5" width="23.2" height="23" fill="url(#gsel2)" rx="3" stroke="#848484" stroke-width="1"/>
<path d="M4.2 207.6 Q3.4 204.4 6.2 204 Q8.8 203.8 10 207 Q11.4 211 14.2 211.6 Q16.6 211.6 16.6 209 Q16.4 207 14.4 207.4" fill="none" stroke="#45456a" stroke-width="1.6" stroke-linecap="round"/>
<circle cx="14.3" cy="208.8" r="1.5" fill="#45456a"/>
<path d="M20 211.8 V216.8 H15 Z" fill="#000"/>
<path d="M5.6 225 L9.6 228.6 L5.8 232.4 L2.4 229.2 Z" fill="#fff" stroke="#54547e" stroke-width="1"/>
<path d="M3.4 229.4 L5.8 231.6 L8.4 229 Z" fill="#f07c00"/>
<path d="M6.4 224.6 L7.4 227" fill="none" stroke="#33334f" stroke-width="1.2"/>
<rect x="8.5" y="234" width="6.5" height="6" fill="#f4f4fa" stroke="#54547e" stroke-width="1"/>
<rect x="11" y="231.5" width="6.5" height="6" fill="none" stroke="#54547e" stroke-width="1"/>
<path d="M11.6 232 V236.8 H15" fill="none" stroke="#f07c00" stroke-width="1.8"/>
<path d="M20 237.6 V242.6 H15 Z" fill="#000"/>
<rect x="4.5" y="254.5" width="11" height="10.6" fill="#fff" stroke="#54547e" stroke-width="1.1"/>
<rect x="5.1" y="260" width="9.8" height="4.5" fill="#d6d6e8"/>
<path d="M20 263.8 V268.8 H15 Z" fill="#000"/>
<circle cx="10" cy="286.2" r="5.6" fill="#fff" stroke="#54547e" stroke-width="1.1"/>
<path d="M4.9 287 H15.1 A5.1 5.1 0 0 1 4.9 287 Z" fill="#d6d6e8"/>
<path d="M20 290.2 V295.2 H15 Z" fill="#000"/>
<path d="M3.3 312.2 L6.6 306.6 H13.4 L16.7 312.2 L13.4 317.8 H6.6 Z" fill="#fff" stroke="#54547e" stroke-width="1.1"/>
<path d="M4.2 312.8 H15.8 L13.1 317.2 H6.9 Z" fill="#d6d6e8"/>
<path d="M20 315.9 V320.9 H15 Z" fill="#000"/>
<circle cx="10" cy="332.6" r="3.7" fill="#fff" stroke="#54547e" stroke-width="1"/>
<path d="M3.6 335.6 V342 H10.6 Z" fill="#f4f4fa" stroke="#54547e" stroke-width="1"/>
<rect x="9.2" y="336.6" width="7" height="6.4" fill="#fff" stroke="#54547e" stroke-width="1"/>
<rect x="9.8" y="339.8" width="5.8" height="2.7" fill="#d6d6e8"/>
<path d="M20 341.7 V346.7 H15 Z" fill="#000"/>
<rect x="3.5" y="384.7" width="13" height="12" fill="#f4f4fa" stroke="#4a4a7a" stroke-width="1.1"/>
<rect x="4" y="388" width="12" height="2.6" fill="#d6d6e8"/>
<rect x="4" y="393.4" width="12" height="2.6" fill="#d6d6e8"/>
<path d="M3.5 387.6 H16.5 M3.5 390.6 H16.5 M3.5 393.6 H16.5 M7.8 384.7 V396.7 M12.2 384.7 V396.7" fill="none" stroke="#7a7aa4" stroke-width="0.8"/>
<rect x="3.7" y="408.4" width="5" height="5" fill="#fff" stroke="#54547e" stroke-width="1"/>
<rect x="6.8" y="411.8" width="6.2" height="6.2" fill="#ffcb5c" stroke="#e8a638" stroke-width="0.8"/>
<defs><linearGradient id="gor" x1="0" y1="0" x2="0" y2="1"><stop offset="0" stop-color="#ff9a2a"/><stop offset="1" stop-color="#ff5a00"/></linearGradient></defs>
<rect x="10.8" y="415.8" width="6.6" height="6.6" fill="url(#gor)" stroke="#5a3a3a" stroke-width="1"/>
<path d="M20 419.8 V424.8 H15 Z" fill="#000"/>
<path d="M3.6 448 L4.6 444.6 L10.6 438.8 L12.6 440.8 L6.8 446.8 Z" fill="#7fa39c" stroke="#4f756e" stroke-width="0.8"/>
<path d="M9.2 437.6 L13.8 442.4 L15 441.2 L14 440 Q17.4 437.6 17 435.6 Q16 433.6 14.2 434 Q13 435.4 12 437.6 L10.6 436.4 Z" fill="#1e1e30"/>
<path d="M20 446 V451 H15 Z" fill="#000"/>
<path d="M10 459.6 Q6.2 465.4 7.3 469 L8.4 472 H11.6 L12.7 469 Q13.8 465.4 10 459.6 Z" fill="#f5f5fb" stroke="#3e3e66" stroke-width="1"/>
<path d="M10 461.4 V467.4" fill="none" stroke="#3e3e66" stroke-width="0.9"/>
<circle cx="10" cy="468" r="0.9" fill="#3e3e66"/>
<rect x="6" y="472.8" width="8" height="2" fill="#232a57"/>
<path d="M20 472.4 V477.4 H15 Z" fill="#000"/>
<path d="M8 487.2 L14.4 493.8 L8 500.8 L1.9 494 Z" fill="#fff" stroke="#4a4a7a" stroke-width="1.2" stroke-linejoin="round"/>
<path d="M3 494.4 H13.4 L8 500 Z" fill="#ee7a00"/>
<path d="M8.6 485.8 L10.2 490.4" fill="none" stroke="#33334f" stroke-width="1.3"/>
<path d="M13.8 491.6 Q16.6 491.8 16.4 494.6 V498.6" fill="none" stroke="#ee7a00" stroke-width="1.6"/>
<path d="M20 498.2 V503.2 H15 Z" fill="#000"/>
<path d="M8.4 512.4 L12.8 517 L8.4 521.6 L4.2 517 Z" fill="#fff" stroke="#4a4a7a" stroke-width="1.1" stroke-linejoin="round"/>
<path d="M5.2 517.4 H11.8 L8.4 521 Z" fill="#ee7a00"/>
<path d="M8.2 511 L9.4 514.4" fill="none" stroke="#33334f" stroke-width="1.2"/>
<defs><linearGradient id="gor2" x1="0" y1="0" x2="0" y2="1"><stop offset="0" stop-color="#fbe0a8"/><stop offset="1" stop-color="#f59a10"/></linearGradient></defs>
<path d="M12.4 520 L16 527 H9 Z" fill="url(#gor2)"/>
<path d="M20 524.3 V529.3 H15 Z" fill="#000"/>
<path d="M31.6 91.5 H33.6 M36.4 91.5 H38.4 M40 91.5 H41.8 M34.5 88 V89.6 M34.5 93.6 V95.4 M34.5 96.6 V98" fill="none" stroke="#000" stroke-width="1.2"/>
<path d="M35.4 92.4 L40.6 97.2" fill="none" stroke="#000" stroke-width="1.3"/>
<path d="M42 98.4 L42 94.2 L37.8 98.4 Z" fill="#000"/>
<rect x="46.2" y="85" width="1" height="5" fill="#2a86d8"/>
<rect x="127.5" y="43.5" width="170" height="36" fill="none" stroke="#f42d38" stroke-width="3"/>
</svg>
</div></body></html>
